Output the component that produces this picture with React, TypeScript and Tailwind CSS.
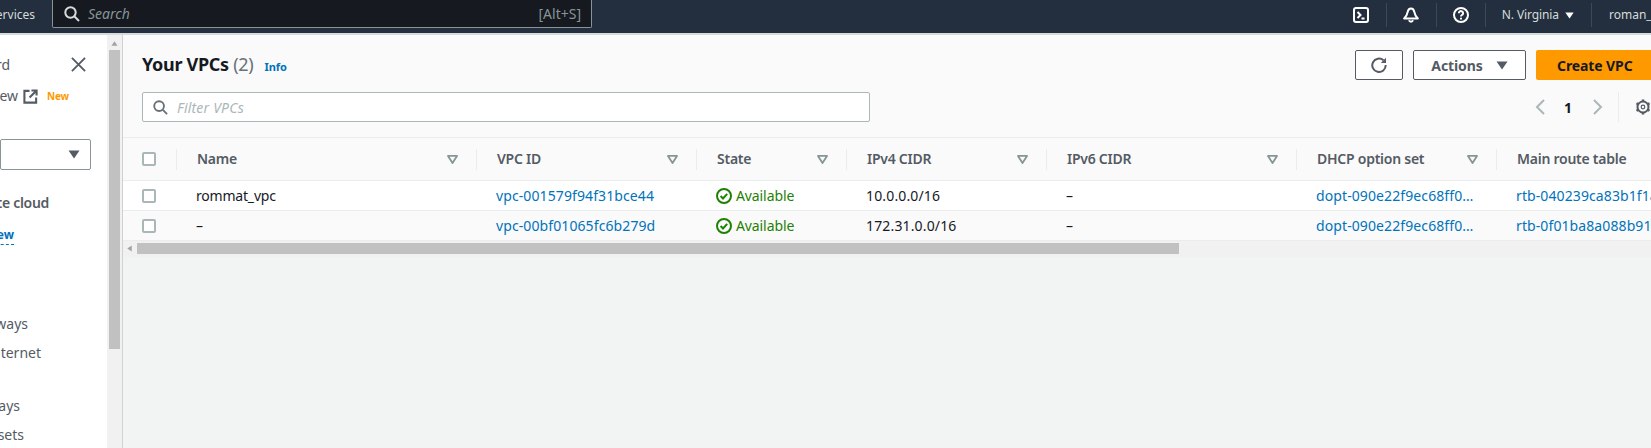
import React from "react";

const F = "font-['Noto_Sans',sans-serif]";

function Triangle({ className = "" }: { className?: string }) {
  return (
    <svg viewBox="0 0 12 10" className={`w-[11px] h-[9px] ${className}`}>
      <path d="M1 1h10L6 9z" fill="none" stroke="#879596" strokeWidth="2" strokeLinejoin="round" />
    </svg>
  );
}

function Caret({ className = "", fill = "#545b64" }: { className?: string; fill?: string }) {
  return (
    <svg viewBox="0 0 12 9" className={className}>
      <path d="M0.500 0.500h11L6 8.500z" fill={fill} />
    </svg>
  );
}

function Check() {
  return <div className="w-[14px] h-[14px] rounded-[2px] border-2 border-[#aab7b8] bg-white" />;
}

function Status() {
  return (
    <span className="flex items-center gap-[4px] text-[#1d8102] tracking-[-0.1px]">
      <svg viewBox="0 0 16 16" className="w-4 h-4" fill="none" stroke="#1d8102" strokeWidth="2">
        <circle cx="8" cy="8" r="7" />
        <path d="M4.600 8l2.400 2.500 4.200-4.600" />
      </svg>
      Available
    </span>
  );
}

const widths = "grid grid-cols-[54px_300px_220px_150px_200px_250px_200px_200px] w-[1574px]";

const headers: [string, boolean][] = [
  ["Name", true],
  ["VPC ID", true],
  ["State", true],
  ["IPv4 CIDR", true],
  ["IPv6 CIDR", true],
  ["DHCP option set", true],
  ["Main route table", false],
];

function HeadCell({ label, filter }: { label: string; filter: boolean }) {
  return (
    <div className="h-full flex items-center">
      <div className="-ml-px w-px h-[21px] bg-[#eaeded]" />
      <div className="flex-1 flex items-center justify-between pl-[20px] pr-[19px]">
        <span className="-mt-[2px] text-[14px] font-semibold tracking-[-0.25px] text-[#545b64] whitespace-nowrap">{label}</span>
        {filter && <Triangle />}
      </div>
    </div>
  );
}

function Row({ name, id, cidr, rtb, shade }: { name: string; id: string; cidr: string; rtb: string; shade: boolean }) {
  const cell = "pl-[19px] flex items-center overflow-hidden whitespace-nowrap";
  return (
    <div className={`${widths} h-[30px] text-[14px] border-b border-[#eaeded] ${shade ? "bg-[#fafafa]" : "bg-white"}`}>
      <div className="pl-[19px] flex items-center"><Check /></div>
      <div className={`${cell} text-[#16191f] tracking-[-0.2px]`}>{name}</div>
      <div className={`${cell} text-[#0073bb] tracking-[0.1px]`}>{id}</div>
      <div className={cell}><Status /></div>
      <div className={`${cell} text-[#16191f] tracking-[0.15px]`}>{cidr}</div>
      <div className={`${cell} text-[#16191f]`}>–</div>
      <div className={`${cell} text-[#0073bb] tracking-[0.1px]`}>dopt-090e22f9ec68ff0…</div>
      <div className={`${cell} text-[#0073bb] tracking-[0.1px]`}>{rtb}</div>
    </div>
  );
}

function NavText({ w, mt, text, className = "" }: { w: number; mt: number; text: string; className?: string }) {
  return (
    <div className={`flex justify-end whitespace-nowrap text-[14px] leading-[20px] ${className}`} style={{ width: w, marginTop: mt }}>
      {text}
    </div>
  );
}

function Divider() {
  return <div className="w-px h-[24px] bg-[#414750]" />;
}

export default function App() {
  return (
    <div className={`${F} w-[1651px] h-[448px] overflow-hidden flex flex-col bg-[#f2f3f3]`}>
      {/* top bar */}
      <header className="h-[33px] shrink-0 bg-[#232f3e] flex items-start text-white">
        <div className="w-[52px] h-[30px] flex justify-end items-center pr-[17px] text-[12px] whitespace-nowrap text-[#d5dbdb]">
          Services
        </div>
        <div className="w-[540px] h-[28px] bg-[#16191f] border border-t-0 border-[#879596] rounded-b-[2px] flex items-center pl-[11px] pr-[10px]">
          <svg viewBox="0 0 16 16" className="w-[16px] h-[16px]" fill="none" stroke="#d5dbdb" strokeWidth="2">
            <circle cx="6.500" cy="6.500" r="5.200" />
            <path d="M10.500 10.500L15 15" />
          </svg>
          <span className="ml-[8px] italic text-[14px] text-[#879596]">Search</span>
          <span className="ml-auto text-[14px] text-[#879596]">[Alt+S]</span>
        </div>
        <div className="flex-1 h-[30px] flex items-center justify-end text-[12px] text-[#d5dbdb]">
          <svg viewBox="0 0 16 16" className="w-[16px] h-[16px] mr-[17px]" fill="none" stroke="#fff" strokeWidth="2">
            <rect x="1" y="1" width="14" height="14" rx="2" />
            <path d="M4.500 5l3 3-3 3M8.500 11.500h3" />
          </svg>
          <Divider />
          <svg viewBox="0 0 16 16" className="w-[16px] h-[16px] ml-[16px] mr-[17px]" fill="none" stroke="#fff" strokeWidth="2" strokeLinejoin="round">
            <path d="M8 1.500c-2 0-3 1.600-3.300 3.400C4.300 7.500 3 9.500 1.200 11.500h13.600C13 9.500 11.700 7.500 11.300 4.900 11 3.100 10 1.500 8 1.500z" />
            <path d="M6 13.200a2.100 2.100 0 004 0" />
          </svg>
          <Divider />
          <svg viewBox="0 0 16 16" className="w-[16px] h-[16px] mx-[16px]" fill="none" stroke="#fff" strokeWidth="2">
            <circle cx="8" cy="8" r="7" />
            <path d="M5.900 6.200a2.100 2.100 0 114 .9c-.6.8-1.900 1-1.900 2.300" />
            <path d="M8 10.800v1.800" />
          </svg>
          <Divider />
          <span className="ml-[16px] whitespace-nowrap tracking-[-0.1px]">N. Virginia</span>
          <Caret className="w-[9px] h-[7px] ml-[6px] mr-[17px]" fill="#fff" />
          <Divider />
          <div className="w-[59px] pl-[17px] overflow-hidden whitespace-nowrap">roman_user</div>
        </div>
      </header>
      <div className="h-[2px] shrink-0 bg-[#d5dbdb]" />

      <div className="flex-1 flex min-h-0">
        {/* side navigation */}
        <nav className="w-[107px] shrink-0 bg-white relative text-[#545b64] overflow-hidden">
          <NavText w={10} mt={20} text="VPC dashboard" />
          <svg viewBox="0 0 16 16" className="absolute left-[71px] top-[22px] w-[15px] h-[15px]" fill="none" stroke="#545b64" strokeWidth="2">
            <path d="M1 1l14 14M15 1L1 15" />
          </svg>
          <div className="flex items-center mt-[11px] h-[20px]">
            <NavText w={18} mt={0} text="EC2 Global View" />
            <svg viewBox="0 0 16 16" className="w-[15px] h-[15px] ml-[5px]" fill="none" stroke="#545b64" strokeWidth="2.200">
              <path d="M7 2H1.500v12.500H14V9" />
              <path d="M9 1.500h5.500V7M14.500 1.500L7 9" />
            </svg>
            <span className="ml-[9px] text-[10px] font-bold tracking-[-0.2px] text-[#ff9900]">New</span>
          </div>
          <div className="mt-[33px] w-[91px] h-[31px] border border-[#879596] rounded-[2px] flex items-center justify-end pr-[10px] bg-white">
            <Caret className="w-[12px] h-[9px]" />
          </div>
          <NavText w={49} mt={23} text="Virtual private cloud" className="font-semibold tracking-[-0.3px]" />
          <div className="w-[14px] flex justify-end mt-[13px]">
            <span className="whitespace-nowrap text-[12px] leading-[18px] font-bold text-[#0073bb] border-b border-dashed border-[#0073bb]">Try the new</span>
          </div>
          <NavText w={28} mt={69} text="Internet gateways" />
          <NavText w={41} mt={9} text="Egress-only internet" />
          <NavText w={20} mt={33} text="Carrier gateways" />
          <NavText w={24} mt={9} text="DHCP option sets" />
        </nav>

        {/* nav scrollbar */}
        <div className="w-[15px] shrink-0 bg-[#f1f1f1] flex flex-col items-center">
          <Caret className="w-[7px] h-[5px] mt-[6px] rotate-180" fill="#a3a3a3" />
          <div className="w-[11px] h-[299px] bg-[#c1c1c1] mt-[4px]" />
        </div>
        <div className="w-px shrink-0 bg-[#cfd2d2]" />

        {/* main */}
        <main className="flex-1 min-w-0 overflow-hidden flex flex-col">
          <div className="h-[103px] shrink-0 bg-[#fafafa] border-b border-[#eaeded] pl-[19px] flex flex-col">
            <div className="flex items-start pt-[15px] h-[57px]">
              <h1 className="-mt-px text-[18px] leading-[30px] font-bold tracking-[-0.3px] text-[#16191f] whitespace-nowrap">
                Your VPCs <span className="font-normal text-[#687078]">(2)</span>
              </h1>
              <span className="ml-[11px] mt-[9px] text-[11px] font-bold text-[#0073bb]">Info</span>
              <div className="ml-auto flex gap-[10px]">
                <button className="w-[48px] h-[30px] border border-[#545b64] rounded-[2px] bg-white flex items-center justify-center">
                  <svg viewBox="0 0 16 16" className="w-[16px] h-[16px]" fill="none" stroke="#545b64" strokeWidth="2">
                    <path d="M12.500 3.300A6.700 6.700 0 1014.700 8" />
                    <path d="M15 0.800v5.200H9.800z" fill="#545b64" stroke="none" />
                  </svg>
                </button>
                <button className="w-[113px] h-[30px] border border-[#545b64] rounded-[2px] bg-white flex items-center justify-center gap-[13px] text-[14px] font-bold tracking-[-0.1px] text-[#545b64]">
                  Actions
                  <Caret className="w-[12px] h-[9px]" />
                </button>
                <button className="w-[115px] h-[30px] rounded-l-[2px] bg-[#ff9900] flex items-center pl-[21px] text-[14px] font-bold tracking-[-0.1px] text-[#16191f] whitespace-nowrap">
                  Create VPC
                </button>
              </div>
            </div>
            <div className="flex items-center h-[30px]">
              <div className="w-[728px] h-[30px] border border-[#aab7b8] rounded-[2px] bg-white flex items-center pl-[10px]">
                <svg viewBox="0 0 16 16" className="w-[15px] h-[15px]" fill="none" stroke="#687078" strokeWidth="2">
                  <circle cx="6.500" cy="6.500" r="5.200" />
                  <path d="M10.500 10.500L15 15" />
                </svg>
                <span className="ml-[9px] italic text-[14px] tracking-[0.2px] text-[#aab7b8]">Filter VPCs</span>
              </div>
              <div className="ml-auto flex items-center h-[30px]">
                <svg viewBox="0 0 10 16" className="w-[11px] h-[16px]" fill="none" stroke="#aab7b8" strokeWidth="2"><path d="M8.500 1L1.500 8l7 7" /></svg>
                <span className="ml-[18px] mr-[20px] text-[14px] font-bold text-[#16191f]">1</span>
                <svg viewBox="0 0 10 16" className="w-[11px] h-[16px]" fill="none" stroke="#aab7b8" strokeWidth="2"><path d="M1.500 1l7 7-7 7" /></svg>
                <div className="ml-[15px] w-px h-[30px] bg-[#eaeded]" />
                <svg viewBox="0 0 16 16" className="ml-[16px] w-[16px] h-[16px]" fill="none" stroke="#545b64">
                  <circle cx="8" cy="8" r="5.500" strokeWidth="2" />
                  <circle cx="8" cy="8" r="1.800" strokeWidth="1.200" />
                  <path d="M8 0.500v2M8 13.500v2M1.500 4.250l1.700 1M12.800 10.750l1.700 1M1.500 11.750l1.700-1M12.800 5.250l1.700-1" strokeWidth="2.600" />
                </svg>
              </div>
            </div>
          </div>

          {/* table */}
          <div className={`${widths} h-[43px] shrink-0 bg-[#fafafa] border-b border-[#eaeded]`}>
            <div className="pl-[19px] flex items-center"><Check /></div>
            {headers.map(([h, f]) => <HeadCell key={h} label={h} filter={f} />)}
          </div>
          <Row name="rommat_vpc" id="vpc-001579f94f31bce44" cidr="10.0.0.0/16" rtb="rtb-040239ca83b1f1a2c" shade={false} />
          <Row name="–" id="vpc-00bf01065fc6b279d" cidr="172.31.0.0/16" rtb="rtb-0f01ba8a088b91e3d" shade />

          {/* horizontal scrollbar */}
          <div className="h-[16px] shrink-0 bg-[#f1f1f1] flex items-start pt-[2px]">
            <Caret className="w-[7px] h-[5px] ml-[3px] mt-[3px] rotate-90" fill="#a3a3a3" />
            <div className="ml-[4px] w-[1042px] h-[11px] bg-[#c1c1c1]" />
          </div>
        </main>
      </div>
    </div>
  );
}
